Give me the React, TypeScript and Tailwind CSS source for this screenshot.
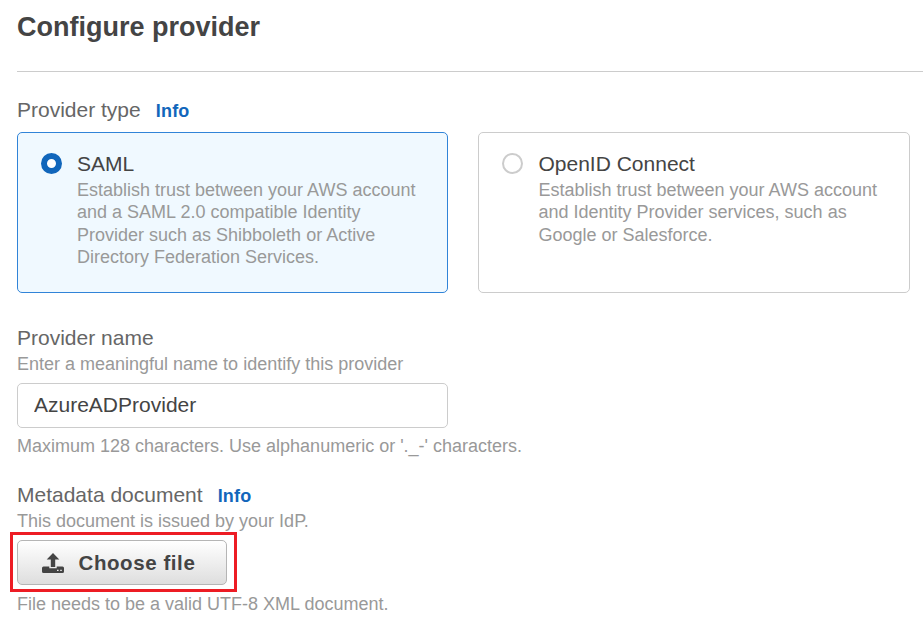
import React from "react";

const label = "text-[21px] leading-[24px] text-[#666] whitespace-nowrap";
const hint = "text-[18px] leading-[22px] text-[#999] whitespace-nowrap";

function Info() {
  return <a className="pt-px text-[18px] leading-[24px] font-bold tracking-[0.2px] text-[#1166bb]">Info</a>;
}

function Option({ title, lines, selected }: { title: string; lines: string[]; selected?: boolean }) {
  return (
    <div
      className={
        selected
          ? "h-[161px] w-[431px] rounded-[5px] border border-[#3184d8] bg-[#f0f9ff] flex pl-[23px] pt-[18px]"
          : "h-[161px] w-[432px] rounded-[5px] border border-[#ccc] bg-white flex pl-[23px] pt-[18px]"
      }
    >
      <span
        className={
          selected
            ? "mt-[2px] size-[21px] shrink-0 rounded-full border-[6px] border-[#1166bb] bg-white"
            : "mt-[2px] size-[21px] shrink-0 rounded-full border-2 border-[#ccc] bg-white"
        }
      />
      <div className={selected ? "ml-[15px] whitespace-nowrap" : "ml-[15.5px] whitespace-nowrap"}>
        <div className="text-[21px] leading-[25px] text-[#444]">{title}</div>
        <div className="mt-[2.5px] text-[18px] leading-[22.5px] text-[#999]">
          {lines.map((l) => (
            <div key={l}>{l}</div>
          ))}
        </div>
      </div>
    </div>
  );
}

export default function App() {
  return (
    <main className="h-[622px] w-[923px] overflow-hidden bg-white pl-[17px] font-['Liberation_Sans',Arial,sans-serif]">
      <h1 className="pt-[11px] text-[27px] leading-[32px] font-bold text-[#444]">Configure provider</h1>
      <hr className="mt-[28px] border-[#ccc]" />
      <div className="mt-[26px] flex h-[24px] gap-[15px]">
        <span className={label}>Provider type</span>
        <Info />
      </div>
      <div className="mt-[10px] flex gap-[30px]">
        <Option
          selected
          title="SAML"
          lines={[
            "Establish trust between your AWS account",
            "and a SAML 2.0 compatible Identity",
            "Provider such as Shibboleth or Active",
            "Directory Federation Services.",
          ]}
        />
        <Option
          title="OpenID Connect"
          lines={[
            "Establish trust between your AWS account",
            "and Identity Provider services, such as",
            "Google or Salesforce.",
          ]}
        />
      </div>
      <div className={"mt-[33px] " + label}>Provider name</div>
      <div className={"mt-[3px] " + hint}>Enter a meaningful name to identify this provider</div>
      <input
        className="mt-[8px] block h-[45px] w-[431px] rounded-[5px] border border-[#ccc] px-[16px] pb-[2px] text-[21px] text-[#444] outline-none"
        defaultValue="AzureADProvider"
      />
      <div className={"mt-[7px] " + hint}>Maximum 128 characters. Use alphanumeric or '._-' characters.</div>
      <div className="mt-[26px] flex h-[24px] gap-[15px]">
        <span className={label}>Metadata document</span>
        <Info />
      </div>
      <div className={"mt-[3px] " + hint}>This document is issued by your IdP.</div>
      <div className="-ml-[7px] h-[60px] w-[227px] border-[3px] border-[#ed1c24] px-[4px] pt-[5px]">
        <button className="flex h-[45px] w-[210px] items-center rounded-[5px] border border-[#b5b5b5] bg-linear-to-b from-white to-[#dedede] pl-[24px] text-[20.5px] font-bold tracking-[0.58px] whitespace-nowrap text-[#444]">
          <svg width="22" height="20" viewBox="0 0 22 20" fill="#444" className="mr-[14.5px] shrink-0">
            <path d="M11 0 17.3 6.5H13.2V14H8.8V6.5H4.7Z" />
            <path
              fillRule="evenodd"
              d="M1.5 13.5H7.3V15.2H14.7V13.5H20.5Q22 13.5 22 15V18.5Q22 20 20.5 20H1.5Q0 20 0 18.5V15Q0 13.5 1.5 13.5ZM15 16.7V18.1H16.6V16.7ZM18.2 16.7V18.1H19.8V16.7Z"
            />
          </svg>
          <span className="pt-[2px]">Choose file</span>
        </button>
      </div>
      <div className={"mt-[1px] " + hint}>File needs to be a valid UTF-8 XML document.</div>
    </main>
  );
}
